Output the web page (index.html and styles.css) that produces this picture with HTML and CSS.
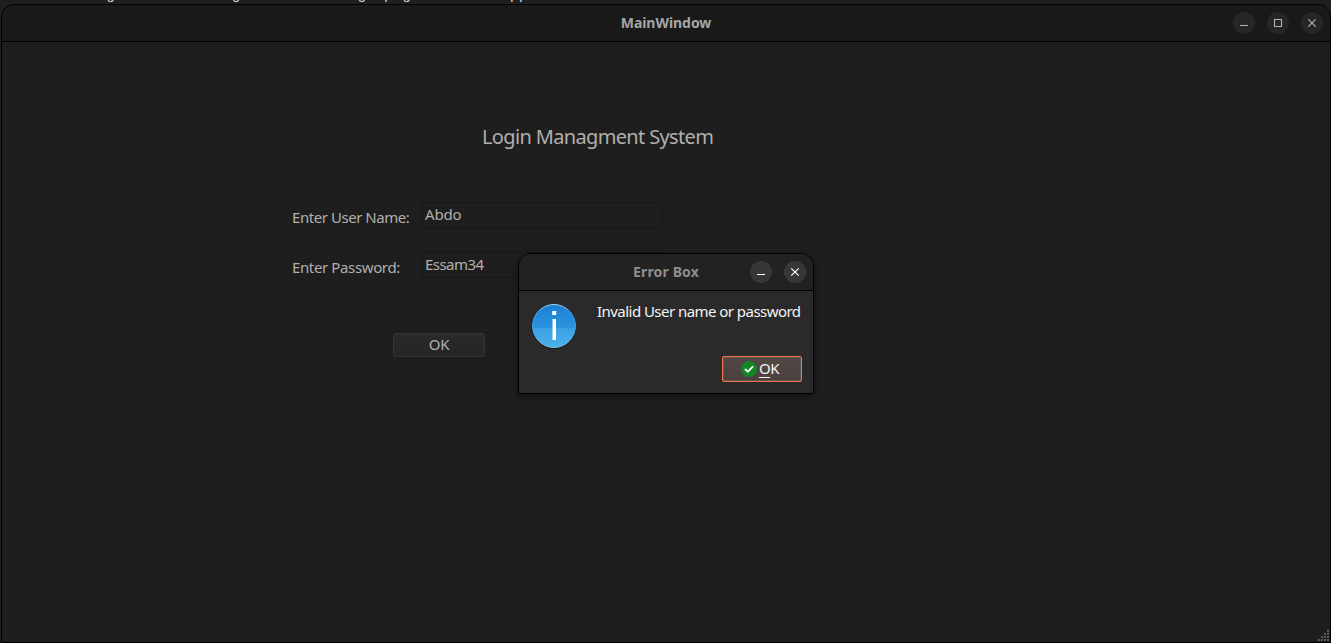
FILE: index.html
```html
<!DOCTYPE html>
<html lang="en">
<head>
<meta charset="utf-8">
<title>MainWindow</title>
<link rel="stylesheet" href="styles.css">
</head>
<body>
<div class="backdrop">g             g             g  p g           pp</div>
<main class="window">
  <header class="titlebar">
    <h1 class="title"><span class="t-main">MainWindow</span></h1>
    <div class="controls">
      <button class="ctl" aria-label="Minimize"><svg width="22" height="22" viewBox="0 0 22 22"><path d="M7 13.5h8"/></svg></button>
      <button class="ctl" aria-label="Maximize"><svg width="22" height="22" viewBox="0 0 22 22"><path d="M7.5 7.5h7v7h-7z"/></svg></button>
      <button class="ctl" aria-label="Close"><svg width="22" height="22" viewBox="0 0 22 22"><path d="M7.3 7.3l7.4 7.4M14.7 7.3l-7.4 7.4"/></svg></button>
    </div>
  </header>
  <section class="content">
    <h2 class="heading"><span class="t-heading">Login Managment System</span></h2>
    <div class="row">
      <label class="label"><span class="t-user">Enter User Name:</span></label>
      <div class="field"><span class="t-abdo">Abdo</span></div>
    </div>
    <div class="row">
      <label class="label"><span class="t-pass">Enter Password:</span></label>
      <div class="field"><span class="t-essam">Essam34</span></div>
    </div>
    <button class="submit"><span class="t-ok">OK</span></button>
  </section>
  <svg class="grip" width="12" height="12" viewBox="0 0 12 12"><path d="M9 0h2v2h-2zM6 3h2v2h-2zM9 3h2v2h-2zM3 6h2v2h-2zM6 6h2v2h-2zM9 6h2v2h-2zM0 9h2v2h-2zM3 9h2v2h-2zM6 9h2v2h-2zM9 9h2v2h-2z"/></svg>
</main>
<div class="dialog" role="dialog">
  <header class="titlebar dialog-bar">
    <h2 class="title"><span class="t-error">Error Box</span></h2>
    <div class="controls">
      <button class="ctl" aria-label="Minimize"><svg width="22" height="22" viewBox="0 0 22 22"><path d="M7 13.5h8"/></svg></button>
      <button class="ctl" aria-label="Close"><svg width="22" height="22" viewBox="0 0 22 22"><path d="M7.3 7.3l7.4 7.4M14.7 7.3l-7.4 7.4"/></svg></button>
    </div>
  </header>
  <div class="dialog-body">
    <svg class="info" width="46" height="46" viewBox="0 0 46 46">
      <defs>
        <linearGradient id="face" x1="0" y1="0" x2="0" y2="1"><stop offset="0" stop-color="#1b7fd6"/><stop offset=".54" stop-color="#2c94de"/><stop offset=".54" stop-color="#3ba0e1"/><stop offset="1" stop-color="#4cb0ea"/></linearGradient>
        <linearGradient id="rim" x1="0" y1="0" x2="0" y2="1"><stop offset="0" stop-color="#a5d3f5"/><stop offset=".25" stop-color="#3b9ce4"/><stop offset=".75" stop-color="#45a8e8"/><stop offset="1" stop-color="#79c7f2"/></linearGradient>
      </defs>
      <circle cx="23" cy="23.5" r="22.4" fill="#171717"/>
      <circle cx="23" cy="23" r="21.5" fill="url(#face)" stroke="url(#rim)"/>
      <path d="M21.2 8h4v4h-4zM21.5 16h3.5v21h-3.5z" fill="#fff"/>
    </svg>
    <p class="message"><span class="t-message">Invalid User name or password</span></p>
    <button class="confirm">
      <svg width="16" height="16" viewBox="0 0 16 16"><circle cx="8" cy="8" r="8" fill="#138526"/><path d="M4 8l2.8 2.8L12 5.3" fill="none" stroke="#fff" stroke-width="1.8"/></svg>
      <span class="t-confirm"><span class="mnemonic">O</span>K</span>
    </button>
  </div>
</div>
</body>
</html>
```
FILE: styles.css
```css
* { box-sizing: border-box; }
body {
  margin: 0;
  height: 643px;
  overflow: hidden;
  position: relative;
  padding: 4px 0 0 1px;
  background: #1f1f1f;
  color: #b1afac;
  font: 15px/20px "Noto Sans", sans-serif;
}
h1, h2, p { margin: 0; font: inherit; }
button { padding: 0; border: 0; font: inherit; color: inherit; }
svg { display: block; }
span { white-space: pre; }

.backdrop {
  position: absolute;
  left: 106px;
  top: -13px;
  color: #d0d0d0;
  font: 15px/18px "Liberation Mono", monospace;
  letter-spacing: -.03px;
  white-space: pre;
}
.window {
  position: relative;
  width: 1330px;
  height: 639px;
  border: 1px solid #000;
  border-radius: 13px 13px 0 0;
  background: #1e1e1e;
  overflow: hidden;
}
.titlebar {
  height: 37px;
  display: grid;
  grid-template-columns: 1fr auto 1fr;
  align-items: center;
  border-bottom: 1px solid #000;
  background: #191919;
}
.title {
  grid-column: 2;
  color: #a6a6a6;
  font-weight: 700;
  font-size: 14px;
}
.controls {
  justify-self: end;
  display: flex;
  gap: 12px;
  padding-right: 7px;
}
.ctl {
  width: 22px;
  height: 22px;
  border-radius: 50%;
  background: #262626;
}
.ctl path { fill: none; stroke: #b4b4b4; stroke-width: 1.1; }

.content {
  display: flex;
  flex-direction: column;
  align-items: flex-start;
  padding: 81px 0 0 290px;
}
.heading {
  margin: 0 0 52px 190px;
  height: 27px;
  font-size: 20px;
  line-height: 27px;
}
.row {
  display: grid;
  grid-template-columns: 130px 241px;
  height: 26px;
  margin-bottom: 24px;
}
.label { padding-top: 5px; }
.field {
  border: 1px solid #171717;
  border-radius: 3px;
  padding: 1px 2px;
}
.submit {
  width: 92px;
  height: 24px;
  margin: 31px 0 0 101px;
  border: 1px solid #353535;
  border-radius: 2px;
  background: linear-gradient(#2a2a2a, #252525);
  box-shadow: 0 0 1px #141414;
  line-height: 18px;
  padding-bottom: 2px;
}
.grip { position: absolute; right: 0; bottom: 0; fill: #5a5a5a; }

.dialog {
  position: absolute;
  left: 518px;
  top: 253px;
  width: 296px;
  height: 141px;
  border: 1px solid #000;
  border-radius: 13px 13px 0 0;
  background: #2a2a2a;
  color: #f4f4f4;
  overflow: hidden;
  box-shadow: 0 2px 6px rgba(0, 0, 0, .5);
}
.dialog-bar { background: #222; }
.dialog-bar .title { color: #8e8e8e; }
.dialog-bar .ctl { background: #373737; }
.dialog-bar .ctl path { stroke: #fff; stroke-width: 1.2; }
.dialog-body {
  display: grid;
  grid-template: 53px 26px / 46px 1fr;
  column-gap: 20px;
  padding: 12px 11px 0 12px;
}
.message { line-height: 16px; }
.confirm {
  grid-column: 2;
  justify-self: end;
  width: 80px;
  height: 26px;
  display: flex;
  align-items: center;
  justify-content: center;
  gap: 2px;
  padding-right: 4px;
  border: 1px solid #f0754c;
  border-radius: 2px;
  background: linear-gradient(#524845, #4a413f);
  box-shadow: inset 0 0 0 1px #625450;
}
.mnemonic {
  text-decoration: underline;
  text-decoration-thickness: 1px;
  text-underline-offset: 3px;
}

.t-main { letter-spacing: -.05px; }
.t-heading { letter-spacing: -.65px; }
.t-user { letter-spacing: -.45px; }
.t-pass { letter-spacing: -.37px; }
.t-abdo { letter-spacing: -.2px; }
.t-essam { letter-spacing: -.55px; }
.t-message { letter-spacing: -.54px; }
.t-error { letter-spacing: .15px; }
.t-ok { letter-spacing: -.2px; }
.t-confirm { line-height: 18px; margin-top: -2px; letter-spacing: -.4px; }
```
